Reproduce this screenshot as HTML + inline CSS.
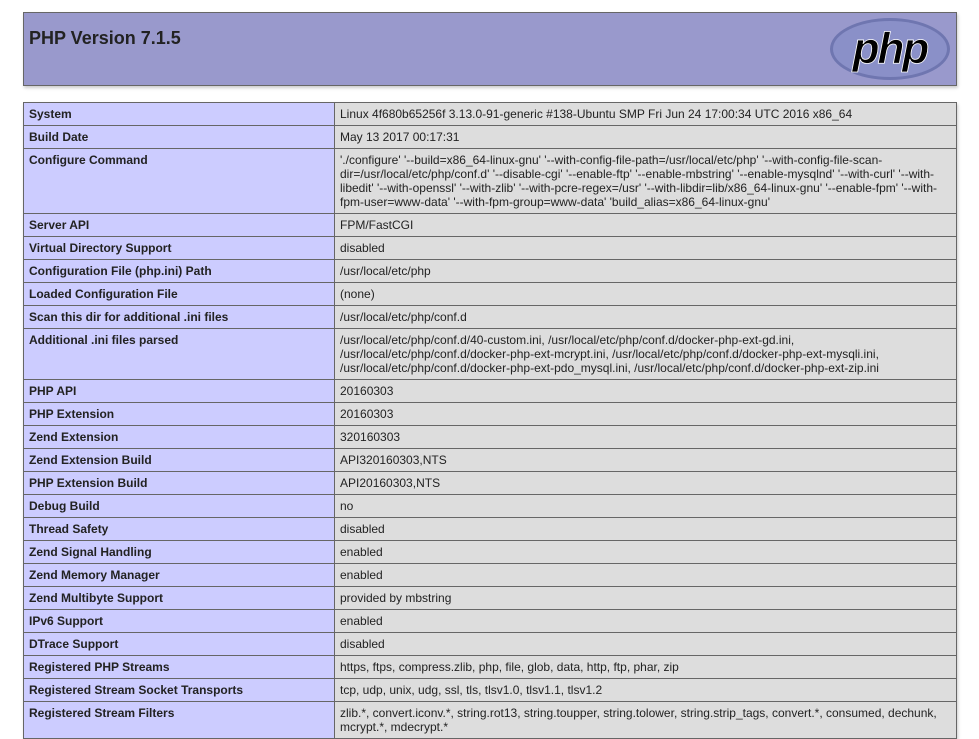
<!DOCTYPE html>
<html><head><meta charset="utf-8">
<style>
body{margin:0;background:#fff;color:#222;font-family:"Liberation Sans",sans-serif;}
table{border-collapse:collapse;border:0;width:934px;box-shadow:1px 2px 3px #ccc;position:absolute;left:23px;table-layout:fixed;}
td{border:1px solid #666;font-size:12px;line-height:14px;vertical-align:baseline;padding:4px 5px;}
.e{background:#ccf;font-weight:bold;width:300px;}
.v{background:#ddd;word-wrap:break-word;}
.h{background:#99c;height:72px;vertical-align:top;padding:0 5px;position:relative;}
h1{font-size:18px;margin:18px 0 0 0;font-weight:bold;color:#222;}
</style></head><body>
<table style="top:12px"><tr><td class="h">
<svg width="122" height="64" viewBox="0 0 122 64" style="position:absolute;right:5px;top:4px">
<ellipse cx="61" cy="32" rx="60" ry="31" fill="#6f76b0"/>
<ellipse cx="61" cy="32" rx="57" ry="28" fill="#8a90c8"/>
<text x="61" y="46" text-anchor="middle" font-family="Liberation Sans,sans-serif" font-style="italic" font-weight="bold" font-size="44" letter-spacing="-2" fill="#000" stroke="#fff" stroke-width="0.8">php</text>
</svg>
<h1>PHP Version 7.1.5</h1>
</td></tr></table>
<table style="top:102px">
<colgroup><col style="width:311px"><col></colgroup>
<tr><td class="e">System</td><td class="v">Linux 4f680b65256f 3.13.0-91-generic #138-Ubuntu SMP Fri Jun 24 17:00:34 UTC 2016 x86_64</td></tr>
<tr><td class="e">Build Date</td><td class="v">May 13 2017 00:17:31</td></tr>
<tr><td class="e">Configure Command</td><td class="v">'./configure' '--build=x86_64-linux-gnu' '--with-config-file-path=/usr/local/etc/php' '--with-config-file-scan-dir=/usr/local/etc/php/conf.d' '--disable-cgi' '--enable-ftp' '--enable-mbstring' '--enable-mysqlnd' '--with-curl' '--with-libedit' '--with-openssl' '--with-zlib' '--with-pcre-regex=/usr' '--with-libdir=lib/x86_64-linux-gnu' '--enable-fpm' '--with-fpm-user=www-data' '--with-fpm-group=www-data' 'build_alias=x86_64-linux-gnu'</td></tr>
<tr><td class="e">Server API</td><td class="v">FPM/FastCGI</td></tr>
<tr><td class="e">Virtual Directory Support</td><td class="v">disabled</td></tr>
<tr><td class="e">Configuration File (php.ini) Path</td><td class="v">/usr/local/etc/php</td></tr>
<tr><td class="e">Loaded Configuration File</td><td class="v">(none)</td></tr>
<tr><td class="e">Scan this dir for additional .ini files</td><td class="v">/usr/local/etc/php/conf.d</td></tr>
<tr><td class="e">Additional .ini files parsed</td><td class="v">/usr/local/etc/php/conf.d/40-custom.ini, /usr/local/etc/php/conf.d/docker-php-ext-gd.ini,<br>/usr/local/etc/php/conf.d/docker-php-ext-mcrypt.ini, /usr/local/etc/php/conf.d/docker-php-ext-mysqli.ini,<br>/usr/local/etc/php/conf.d/docker-php-ext-pdo_mysql.ini, /usr/local/etc/php/conf.d/docker-php-ext-zip.ini</td></tr>
<tr><td class="e">PHP API</td><td class="v">20160303</td></tr>
<tr><td class="e">PHP Extension</td><td class="v">20160303</td></tr>
<tr><td class="e">Zend Extension</td><td class="v">320160303</td></tr>
<tr><td class="e">Zend Extension Build</td><td class="v">API320160303,NTS</td></tr>
<tr><td class="e">PHP Extension Build</td><td class="v">API20160303,NTS</td></tr>
<tr><td class="e">Debug Build</td><td class="v">no</td></tr>
<tr><td class="e">Thread Safety</td><td class="v">disabled</td></tr>
<tr><td class="e">Zend Signal Handling</td><td class="v">enabled</td></tr>
<tr><td class="e">Zend Memory Manager</td><td class="v">enabled</td></tr>
<tr><td class="e">Zend Multibyte Support</td><td class="v">provided by mbstring</td></tr>
<tr><td class="e">IPv6 Support</td><td class="v">enabled</td></tr>
<tr><td class="e">DTrace Support</td><td class="v">disabled</td></tr>
<tr><td class="e">Registered PHP Streams</td><td class="v">https, ftps, compress.zlib, php, file, glob, data, http, ftp, phar, zip</td></tr>
<tr><td class="e">Registered Stream Socket Transports</td><td class="v">tcp, udp, unix, udg, ssl, tls, tlsv1.0, tlsv1.1, tlsv1.2</td></tr>
<tr><td class="e">Registered Stream Filters</td><td class="v">zlib.*, convert.iconv.*, string.rot13, string.toupper, string.tolower, string.strip_tags, convert.*, consumed, dechunk, mcrypt.*, mdecrypt.*</td></tr>
</table>
</body></html>
